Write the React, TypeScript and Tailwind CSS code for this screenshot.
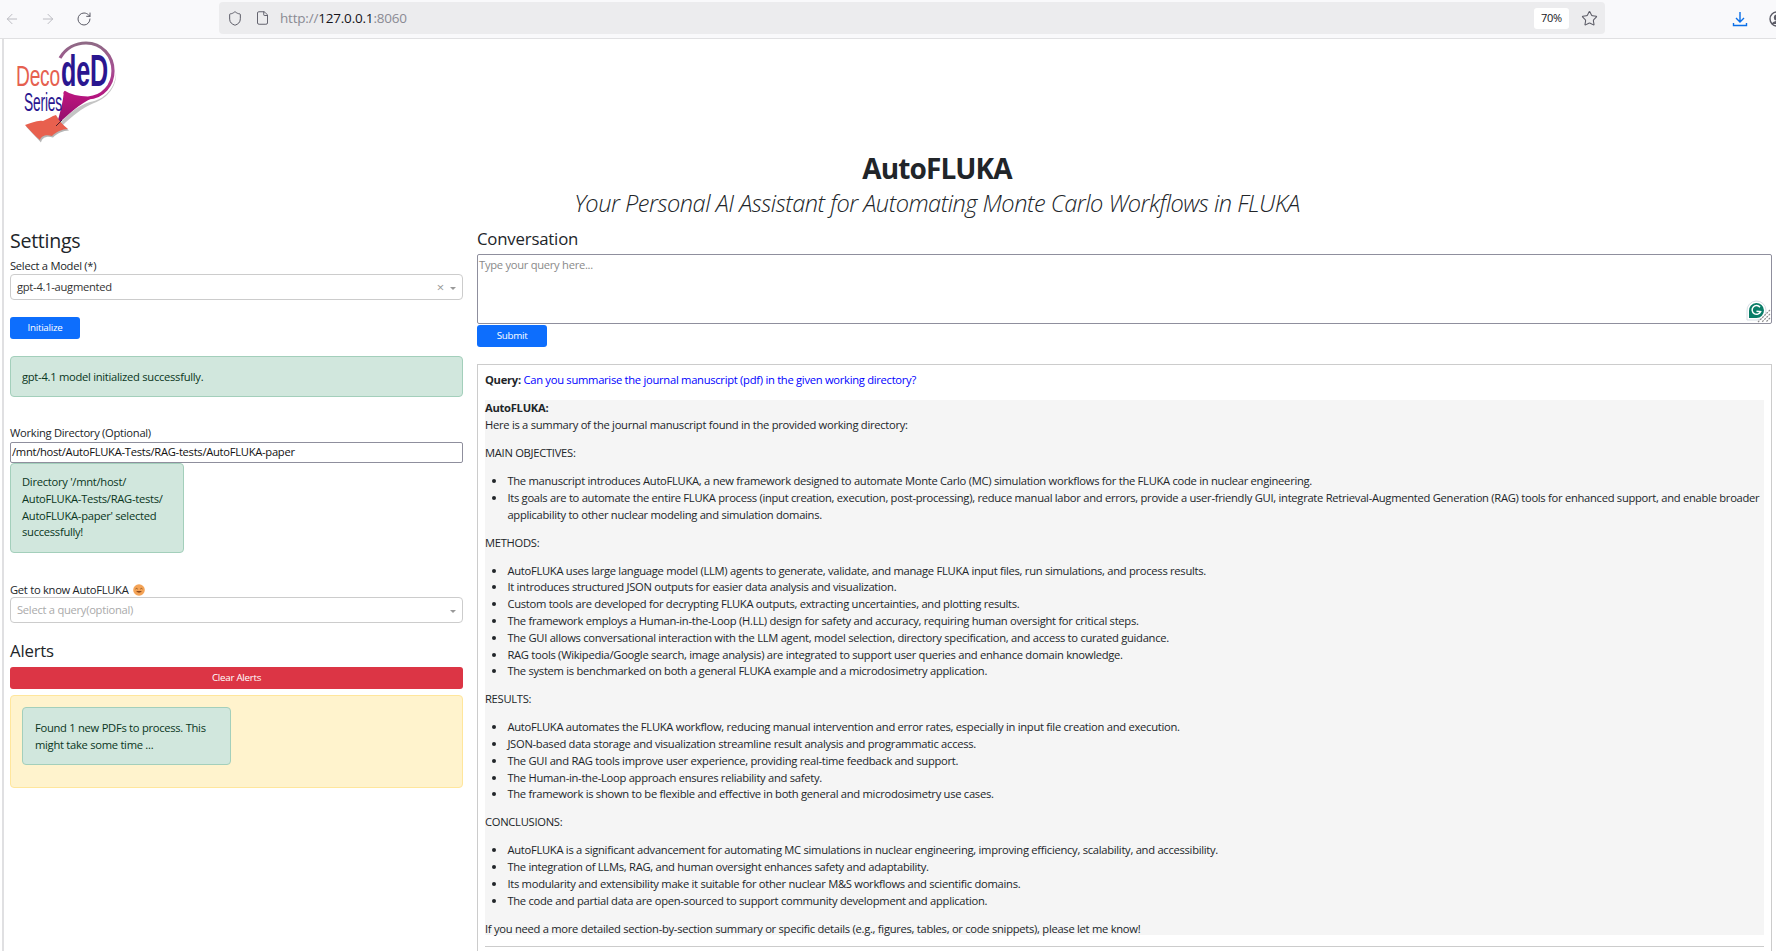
import React from "react";
import { ArrowLeft, ArrowRight, RotateCw, Shield, File, Star } from "lucide-react";

function Logo() {
  return (
    <svg width="130" height="106" viewBox="12 40 130 106" className="block">
      <defs>
        <linearGradient id="ring" x1="0" y1="0" x2="0" y2="1">
          <stop offset="0" stopColor="#8f6a86" />
          <stop offset="0.5" stopColor="#a64d92" />
          <stop offset="1" stopColor="#b5127e" />
        </linearGradient>
        <linearGradient id="tail" x1="0" y1="0" x2="0" y2="1">
          <stop offset="0" stopColor="#c0157f" />
          <stop offset="1" stopColor="#8d0f6a" />
        </linearGradient>
      </defs>
      <path d="M116 72 C116 88 104 100 90 102 C78 105 66 116 56 127 L62 126 C72 116 82 108 94 103 C108 98 117 86 116 72 Z" fill="#8a8a8a" opacity="0.5" />
      <path d="M60 58 C66 48 76 43 86 43 C102 43 113 56 113 71 C113 85 103 97 88 98 C78 98 70 96 64 92" fill="none" stroke="url(#ring)" strokeWidth="3.2" />
      <path d="M64 91 C72 97 82 99 92 98 C80 104 68 114 56 126 C60 114 63 102 64 91 Z" fill="url(#tail)" />
      <text x="16" y="86" fontFamily="'Liberation Sans',sans-serif" fontSize="29" fill="#e5604f" textLength="44" lengthAdjust="spacingAndGlyphs">Deco</text>
      <text x="61" y="86" fontFamily="'Liberation Sans',sans-serif" fontSize="44" fontWeight="700" fill="#2a1690" textLength="47" lengthAdjust="spacingAndGlyphs">deD</text>
      <text x="24" y="111" fontFamily="'Liberation Sans',sans-serif" fontSize="26" fill="#2a1690" textLength="38" lengthAdjust="spacingAndGlyphs">Series</text>
      <path d="M25 125 C32 123 37 120 43 121 C48 119 52 116 56 115 C58 120 62 124 68 129 C62 129 56 132 52 136 C46 134 41 136 40 141 C35 136 30 130 25 125 Z" fill="#6b6b6b" opacity="0.5" transform="translate(1 1.5)" />
      <path d="M25 125 C32 123 37 120 43 121 C48 119 52 116 56 115 C58 120 62 124 68 129 C62 129 56 132 52 136 C46 134 41 136 40 140 C35 136 30 130 25 125 Z" fill="#e8604e" />
      <path d="M56 126 L62 120" stroke="#2b1020" strokeWidth="0.8" />
    </svg>
  );
}

function Grammarly() {
  return (
    <svg width="21" height="21" viewBox="0 0 21 21" className="absolute right-[5px] bottom-[3px]">
      <path d="M1 11 A9.5 9.5 0 1 1 11 20 L1 20 Z" fill="#fff" stroke="#d6dde4" strokeWidth="1" />
      <path d="M3 11 A7.5 7.5 0 1 1 10.5 18 L3 18 Z" fill="#0a7d68" />
      <path d="M14 7.2 A4.4 4.4 0 1 0 14.6 11.6 L10.5 11.2" fill="none" stroke="#fff" strokeWidth="1.5" />
    </svg>
  );
}

function Resize() {
  return (
    <svg width="15" height="15" viewBox="0 0 15 15" className="absolute right-[1px] bottom-[1px]">
      <path d="M14 2 L2 14 M14 6 L6 14 M14 10 L10 14" stroke="#8a8a8a" strokeWidth="1.2" strokeDasharray="2 1" />
    </svg>
  );
}

function Caret() {
  return <span className="w-0 h-0 border-x-[3px] border-x-transparent border-t-[3px] border-t-[#999] mt-[3px]" />;
}

function Smile() {
  return (
    <svg width="12" height="12" viewBox="0 0 12 12" className="inline-block ml-[5px] align-[-2px]">
      <circle cx="6" cy="6" r="5.8" fill="#f4a356" />
      <path d="M2.5 5 Q3.5 3.8 4.7 5 M7.3 5 Q8.5 3.8 9.5 5" fill="none" stroke="#7a4a1c" strokeWidth="0.8" />
      <path d="M3 7 Q6 10.5 9 7 Z" fill="#8c4a1f" />
    </svg>
  );
}

function Alert({ className, children }: { className: string; children: React.ReactNode }) {
  return <div className={`bg-[#d1e7dd] border border-[#a3cfbb] rounded-[4px] text-[#0a3622] ${className}`}>{children}</div>;
}

function Li({ children }: { children: React.ReactNode }) {
  return <li className="pl-0">{children}</li>;
}

function Ul({ children }: { children: React.ReactNode }) {
  return <ul className="list-disc pl-[22.4px] mb-[11.2px]">{children}</ul>;
}

export default function App() {
  return (
    <div className="h-[951px] overflow-hidden bg-white font-['Open_Sans',sans-serif] text-[11.2px] leading-[16.8px] text-[#212529] tracking-[-0.28px]">
      <div className="h-[39px] bg-[#f9f9fb] border-b border-[#e0e0e2] flex items-center relative tracking-normal overflow-hidden">
        <ArrowLeft className="ml-[4px] w-[16px] h-[16px] shrink-0 text-[#bcbcc2]" strokeWidth={1.5} />
        <ArrowRight className="ml-[20px] w-[16px] h-[16px] shrink-0 text-[#bcbcc2]" strokeWidth={1.5} />
        <RotateCw className="ml-[20px] w-[16px] h-[16px] shrink-0 text-[#5b5b66]" strokeWidth={1.5} />
        <div className="ml-[127px] w-[1386px] shrink-0 h-[32px] -mt-[2px] bg-[#ececee] rounded-[4px] flex items-center">
          <Shield className="ml-[8px] w-[16px] h-[17px] text-[#5b5b66]" strokeWidth={1.5} />
          <File className="ml-[12px] w-[15px] h-[16px] text-[#5b5b66]" strokeWidth={1.5} />
          <span className="ml-[10px] text-[13.5px] text-[#8a8a93] tracking-[-0.2px]">
            http://<span className="text-[#15141a]">127.0.0.1</span>:8060
          </span>
          <div className="flex-1" />
          <div className="w-[35px] h-[21px] bg-white rounded-[3px] flex items-center justify-center text-[11px] tracking-[-0.3px] text-[#15141a]">70%</div>
          <Star className="ml-[12px] mr-[7px] w-[17px] h-[17px] text-[#5b5b66]" strokeWidth={1.5} />
        </div>
        <svg width="16" height="16" viewBox="0 0 16 16" className="ml-[127px] shrink-0" fill="none" stroke="#0a6fe8" strokeWidth="1.4">
          <path d="M8 1 V11 M4 7 L8 11 L12 7 M1.5 12 V14.5 H14.5 V12" />
        </svg>
        <svg width="16" height="16" viewBox="0 0 16 16" className="ml-[21px] shrink-0" fill="none" stroke="#5b5b66" strokeWidth="1.4">
          <circle cx="8" cy="8" r="7" />
          <circle cx="8" cy="6.5" r="2.5" fill="#5b5b66" />
          <path d="M3 13 Q8 8 13 13" fill="#5b5b66" />
        </svg>
      </div>

      <div className="ml-[2px] border-l-2 border-[#e0e0e2] h-[912px] pl-[6px] pr-[4px]">
        <div className="pl-[2px] pt-[1px] h-[102px]"><Logo /></div>
        <div className="text-center text-[#212529] tracking-normal pl-[92px]">
          <div className="text-[28px] leading-[32px] font-bold mt-[11px] tracking-[-0.9px]">AutoFLUKA</div>
          <div className="text-[23.6px] leading-[28px] italic mt-[5px] font-light tracking-[-0.5px]">Your Personal AI Assistant for Automating Monte Carlo Workflows in FLUKA</div>
        </div>

        <div className="flex gap-[14px] mt-[-2px]">
          <div className="w-[453px] shrink-0">
            <div className="text-[19.6px] leading-[24px] mt-[14px] tracking-[-0.3px]">Settings</div>
            <div className="mt-[4px] leading-[17px]">Select a Model (*)</div>
            <div className="h-[26px] border border-[#ccc] rounded-[4px] flex items-center pl-[6px] pr-[6px] text-[#333]">
              <span className="flex-1">gpt-4.1-augmented</span>
              <span className="text-[#999] text-[13px] leading-none mr-[6px]">×</span>
              <Caret />
            </div>
            <button className="block mt-[17px] w-[70px] h-[22px] bg-[#0d6efd] rounded-[3px] text-white text-[9.8px] leading-none">Initialize</button>
            <Alert className="mt-[17px] h-[41px] px-[11px] pt-[1px] flex items-center">gpt-4.1 model initialized successfully.</Alert>
            <div className="mt-[27px] leading-[17px]">Working Directory (Optional)</div>
            <div className="h-[21px] mt-[1px] border border-[#8f8f9d] rounded-[2px] pl-[1px] flex items-center text-[#111]">/mnt/host/AutoFLUKA-Tests/RAG-tests/AutoFLUKA-paper</div>
            <Alert className="w-[174px] h-[90px] pl-[11px] pr-[8px] pt-[10px]">
              Directory '/mnt/host/<br />AutoFLUKA-Tests/RAG-tests/<br />AutoFLUKA-paper' selected<br />successfully!
            </Alert>
            <div className="mt-[28px] leading-[17px]">Get to know AutoFLUKA<Smile /></div>
            <div className="h-[26px] -mt-[1px] border border-[#ccc] rounded-[4px] flex items-center pl-[6px] pr-[6px] text-[#aaa]">
              <span className="flex-1">Select a query(optional)</span>
              <Caret />
            </div>
            <div className="text-[16.8px] leading-[22px] mt-[17px] tracking-[-0.2px]">Alerts</div>
            <button className="block mt-[5px] w-full h-[22px] bg-[#dc3545] rounded-[3px] text-white text-[9.8px] leading-none">Clear Alerts</button>
            <div className="mt-[6px] h-[93px] bg-[#fff3cd] border border-[#ffe69c] rounded-[4px] pl-[11px] pt-[11px]">
              <Alert className="w-[209px] h-[58px] pl-[12px] pt-[12px]">Found 1 new PDFs to process. This<br />might take some time ...</Alert>
            </div>
          </div>

          <div className="flex-1 min-w-0">
            <div className="text-[16.8px] leading-[22px] mt-[13px] tracking-[-0.2px]">Conversation</div>
            <div className="relative mt-[4px] h-[70px]">
              <textarea placeholder="Type your query here..." className="block w-full h-full resize-none border border-[#8f8f9d] rounded-[2px] pl-[1px] pt-[2px] text-[#111] placeholder:text-[#8a8a8a] outline-none" />
              <Grammarly />
              <Resize />
            </div>
            <button className="block mt-[1px] w-[70px] h-[22px] bg-[#0d6efd] rounded-[3px] text-white text-[9.8px] leading-none">Submit</button>
            <div className="mt-[17px] h-[600px] border border-b-0 border-[#ccc] px-[7px] pt-[6px]">
              <div className="mb-[12.2px] leading-[17px]">
                <b className="font-bold">Query: </b><span className="text-[#0000ff]">Can you summarise the journal manuscript (pdf) in the given working directory?</span>
              </div>
              <div className="bg-[#f5f5f5] h-[535px]">
                <div className="font-bold">AutoFLUKA:</div>
                <p className="mb-[11.2px]">Here is a summary of the journal manuscript found in the provided working directory:</p>
                <p className="mb-[11.2px]">MAIN OBJECTIVES:</p>
                <Ul>
                  <Li>The manuscript introduces AutoFLUKA, a new framework designed to automate Monte Carlo (MC) simulation workflows for the FLUKA code in nuclear engineering.</Li>
                  <Li>Its goals are to automate the entire FLUKA process (input creation, execution, post-processing), reduce manual labor and errors, provide a user-friendly GUI, integrate Retrieval-Augmented Generation (RAG) tools for enhanced support, and enable broader applicability to other nuclear modeling and simulation domains.</Li>
                </Ul>
                <p className="mb-[11.2px]">METHODS:</p>
                <Ul>
                  <Li>AutoFLUKA uses large language model (LLM) agents to generate, validate, and manage FLUKA input files, run simulations, and process results.</Li>
                  <Li>It introduces structured JSON outputs for easier data analysis and visualization.</Li>
                  <Li>Custom tools are developed for decrypting FLUKA outputs, extracting uncertainties, and plotting results.</Li>
                  <Li>The framework employs a Human-in-the-Loop (H.LL) design for safety and accuracy, requiring human oversight for critical steps.</Li>
                  <Li>The GUI allows conversational interaction with the LLM agent, model selection, directory specification, and access to curated guidance.</Li>
                  <Li>RAG tools (Wikipedia/Google search, image analysis) are integrated to support user queries and enhance domain knowledge.</Li>
                  <Li>The system is benchmarked on both a general FLUKA example and a microdosimetry application.</Li>
                </Ul>
                <p className="mb-[11.2px]">RESULTS:</p>
                <Ul>
                  <Li>AutoFLUKA automates the FLUKA workflow, reducing manual intervention and error rates, especially in input file creation and execution.</Li>
                  <Li>JSON-based data storage and visualization streamline result analysis and programmatic access.</Li>
                  <Li>The GUI and RAG tools improve user experience, providing real-time feedback and support.</Li>
                  <Li>The Human-in-the-Loop approach ensures reliability and safety.</Li>
                  <Li>The framework is shown to be flexible and effective in both general and microdosimetry use cases.</Li>
                </Ul>
                <p className="mb-[11.2px]">CONCLUSIONS:</p>
                <Ul>
                  <Li>AutoFLUKA is a significant advancement for automating MC simulations in nuclear engineering, improving efficiency, scalability, and accessibility.</Li>
                  <Li>The integration of LLMs, RAG, and human oversight enhances safety and adaptability.</Li>
                  <Li>Its modularity and extensibility make it suitable for other nuclear M&amp;S workflows and scientific domains.</Li>
                  <Li>The code and partial data are open-sourced to support community development and application.</Li>
                </Ul>
                <p>If you need a more detailed section-by-section summary or specific details (e.g., figures, tables, or code snippets), please let me know!</p>
              </div>
              <div className="mt-[11px] border-t border-[#ccc]" />
            </div>
          </div>
        </div>
      </div>
    </div>
  );
}
